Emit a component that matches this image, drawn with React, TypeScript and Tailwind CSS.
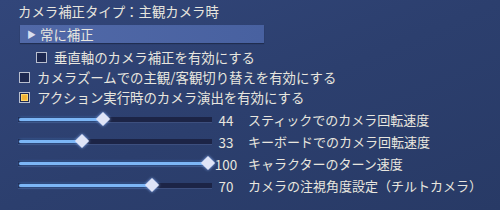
import React from "react";

const sliders = [
  { value: 44, label: "スティックでのカメラ回転速度" },
  { value: 33, label: "キーボードでのカメラ回転速度" },
  { value: 100, label: "キャラクターのターン速度" },
  { value: 70, label: "カメラの注視角度設定（チルトカメラ）" },
];

function CheckBox({ checked }: { checked?: boolean }) {
  return (
    <span className="flex h-[11px] w-[11px] shrink-0 items-center justify-center border border-[#b9bfcf] bg-[#1d2850]">
      {checked && (
        <span className="h-[7px] w-[7px] bg-[#f2b234] shadow-[inset_0_0_1px_1px_#ffd970]" />
      )}
    </span>
  );
}

function Slider({ value }: { value: number }) {
  const center = 2 + value * 1.88;
  return (
    <div className="relative h-[6px] w-[194px] shrink-0 border-b border-[#3d4f7e] bg-[#1c2446]">
      <div
        className="absolute left-[1px] top-[1px] h-[3px] rounded-full bg-[#7cb6f6] shadow-[0_0_3px_#4f8fe0]"
        style={{ width: center }}
      />
      <div
        className="absolute top-[-3px] h-[10px] w-[10px] -translate-x-1/2 rotate-45 bg-[#dfe4f7] shadow-[0_0_3px_#8fb8ff]"
        style={{ left: center }}
      />
    </div>
  );
}

export default function App() {
  return (
    <div
      className="flex h-[210px] w-[500px] flex-col overflow-hidden bg-gradient-to-br from-[#32467a] via-[#2c3f6e] to-[#283a66] text-[13.4px] text-[#e8e6df]"
      style={{ fontFamily: '"Noto Sans CJK JP", "Noto Sans", sans-serif' }}
    >
      {/* Title */}
      <div className="h-[22px] pl-[18px] leading-[22px]">カメラ補正タイプ：主観カメラ時</div>

      {/* Dropdown bar */}
      <div className="ml-[20px] mt-[3px] flex h-[18px] w-[244px] items-center gap-[4px] bg-gradient-to-r from-[#5169a8] to-[#4861a0] pl-[7px] shadow-[0_1px_1px_rgba(0,0,0,0.3)]">
        <span className="text-[9px] leading-none text-[#d8def0]">▶</span>
        <span className="leading-[18px]">常に補正</span>
      </div>

      {/* Checkboxes */}
      <div className="mt-[4px] flex h-[20px] items-center gap-[7px] pl-[36px]">
        <CheckBox />
        <span>垂直軸のカメラ補正を有効にする</span>
      </div>
      <div className="flex h-[20px] items-center gap-[7px] pl-[19px]">
        <CheckBox />
        <span>カメラズームでの主観/客観切り替えを有効にする</span>
      </div>
      <div className="flex h-[20px] items-center gap-[7px] pl-[19px]">
        <CheckBox checked />
        <span>アクション実行時のカメラ演出を有効にする</span>
      </div>

      {/* Sliders */}
      <div className="mt-[2px] flex flex-col text-[13px]">
        {sliders.map((s) => (
          <div key={s.label} className="flex h-[22px] items-center pl-[18px]">
            <Slider value={s.value} />
            <span className="ml-[2px] w-[24px] text-center text-[13.4px]">{s.value}</span>
            <span className="ml-[10px]">{s.label}</span>
          </div>
        ))}
      </div>
    </div>
  );
}
